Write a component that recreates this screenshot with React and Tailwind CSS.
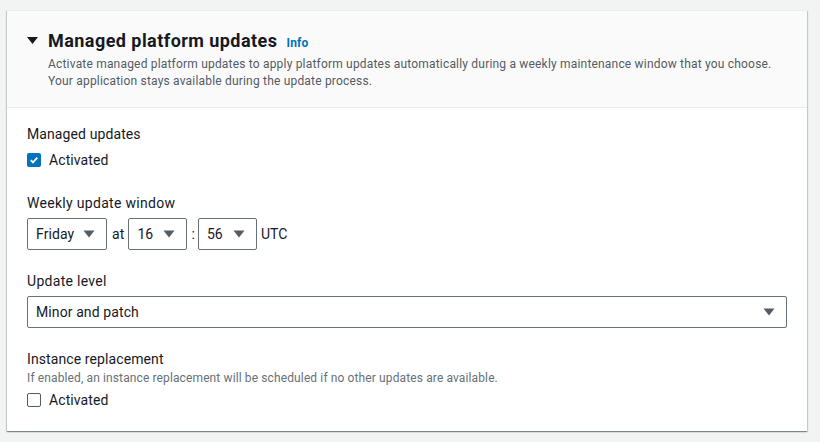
import React from "react";

function Arrow({ className = "" }) {
  return (
    <svg width="12" height="8" viewBox="0 0 12 8" className={className}>
      <path d="M0.5 0.5 L11.5 0.5 L6 7.5 Z" fill="#545b64" />
    </svg>
  );
}

function Select({ value, width }) {
  return (
    <div
      className={`flex h-[32px] items-center justify-between rounded-[2px] border border-[#687078] bg-white pl-[8px] pr-[11px] text-[14px] tracking-[0.1px] text-[#16191f] ${width}`}
    >
      <span>{value}</span>
      <Arrow />
    </div>
  );
}

function Checkbox({ checked }) {
  if (checked) {
    return (
      <div className="flex h-[14px] w-[14px] items-center justify-center rounded-[2px] bg-[#0073bb]">
        <svg width="10" height="10" viewBox="0 0 10 10">
          <path d="M1.8 5.2 L4 7.4 L8.3 2.6" fill="none" stroke="white" strokeWidth="1.8" />
        </svg>
      </div>
    );
  }
  return <div className="h-[14px] w-[14px] rounded-[2px] border border-[#545b64] bg-white" />;
}

export default function App() {
  return (
    <div
      className="min-h-[442px] w-[820px] bg-[#f2f3f3] pl-[7px] pt-[10px]"
      style={{ fontFamily: 'Roboto, "Noto Sans", Arial, sans-serif' }}
    >
      <div className="w-[800px] bg-white shadow-[0_1px_1px_0_rgba(0,28,36,0.3),1px_1px_1px_0_rgba(0,28,36,0.15),-1px_1px_1px_0_rgba(0,28,36,0.15)] border-t border-[#eaeded]">
        <div className="h-[97px] border-b border-[#eaeded] bg-[#fafafa] px-[20px] pt-[17px]">
          <div className="flex items-center">
            <svg width="11" height="8" viewBox="0 0 11 8" className="ml-[0px] mr-[10px]">
              <path d="M0 0 L11 0 L5.5 7 Z" fill="#16191f" />
            </svg>
            <span className="text-[18px] font-bold leading-[26px] tracking-[0.45px] text-[#16191f]">Managed platform updates</span>
            <span className="ml-[9px] mt-[3px] text-[12px] font-bold tracking-[0.2px] text-[#0073bb]">Info</span>
          </div>
          <p className="ml-[21px] mt-[2px] text-[12px] leading-[17px] tracking-[0.19px] text-[#545b64]">
            Activate managed platform updates to apply platform updates automatically during a weekly maintenance window that you choose.
            <br />
            Your application stays available during the update process.
          </p>
        </div>
        <div className="px-[20px] pb-[20px] pt-[15px] text-[14px] leading-[22px] tracking-[0.1px] text-[#16191f]">
          <div>Managed updates</div>
          <div className="mt-[4px] flex items-center gap-[8px]">
            <Checkbox checked />
            <span>Activated</span>
          </div>

          <div className="mt-[21px] tracking-[0.3px]">Weekly update window</div>
          <div className="mt-[4px] flex items-center">
            <Select value="Friday" width="w-[80px]" />
            <span className="ml-[5px] mr-[4px]">at</span>
            <Select value="16" width="w-[59px]" />
            <span className="ml-[4px] mr-[3px]">:</span>
            <Select value="56" width="w-[59px]" />
            <span className="ml-[4px]">UTC</span>
          </div>

          <div className="mt-[20px] tracking-[0.3px]">Update level</div>
          <div className="mt-[4px]">
            <Select value="Minor and patch" width="w-full" />
          </div>

          <div className="mt-[20px]">Instance replacement</div>
          <div className="text-[12px] leading-[16px] tracking-[0.12px] text-[#687078]">
            If enabled, an instance replacement will be scheduled if no other updates are available.
          </div>
          <div className="mt-[3px] flex items-center gap-[8px]">
            <Checkbox />
            <span>Activated</span>
          </div>
        </div>
      </div>
    </div>
  );
}
